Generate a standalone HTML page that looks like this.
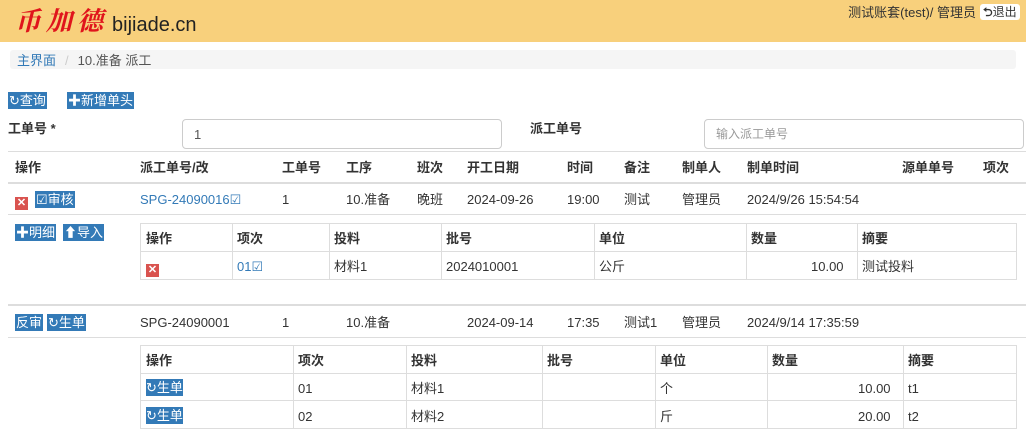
<!DOCTYPE html><html><head><meta charset="utf-8"><style>
*{margin:0;padding:0;box-sizing:border-box}
body{width:1026px;height:439px;overflow:hidden;background:#fff;font-family:"Liberation Sans","Noto Sans CJK SC",sans-serif;font-size:13px;line-height:17px;color:#333;position:relative}
.a{position:absolute;white-space:nowrap}
.b{position:absolute;background:#337ab7;color:#fff;height:17px;line-height:17px;font-size:13px;padding:0 1px;white-space:nowrap}
.hl{position:absolute;height:1px;background:#ddd}
.bold{font-weight:bold}
.x{display:inline-block;width:13px;height:13px;background:#d9534f;color:#fff;font-size:11px;line-height:13px;text-align:center;font-weight:bold;vertical-align:-1px}
.t{position:absolute;border:1px solid #ddd}
.t div{position:absolute;white-space:nowrap}
.vl{position:absolute;top:0;bottom:0;width:1px;background:#ddd}
.blue{color:#337ab7}
</style></head><body>
<div class="a" style="left:0;top:0;width:1026px;height:42px;background:#f8d07c"></div>
<div class="a" style="left:15px;top:4px;font-family:'Noto Serif CJK SC',serif;font-size:26px;line-height:32px;color:#e0141c;font-weight:bold;letter-spacing:5px;font-style:italic">币加德</div>
<div class="a" style="left:112px;top:14px;font-size:20px;line-height:22px;color:#222">bijiade.cn</div>
<div class="a" style="right:50px;top:4px;font-size:13px;color:#333">测试账套(test)/ 管理员</div>
<div class="a" style="left:980px;top:4px;width:40px;height:16px;background:#fff;border-radius:3px;font-size:12px;line-height:16px;padding-left:3px;color:#333"><b>⮌</b>退出</div>
<div class="a" style="left:10px;top:50px;width:1006px;height:19px;background:#f5f5f5;border-radius:3px"></div>
<div class="a" style="left:17px;top:52px;line-height:17px"><span class="blue">主界面</span><span style="color:#ccc;padding:0 9px">/</span><span style="color:#555">10.准备 派工</span></div>
<div class="b" style="left:8px;top:92px">↻查询</div>
<div class="b" style="left:67px;top:92px">✚新增单头</div>
<div class="a bold" style="left:8px;top:120px">工单号 *</div>
<div class="a" style="left:182px;top:119px;width:320px;height:30px;border:1px solid #ccc;border-radius:4px;padding:6px 11px;color:#555">1</div>
<div class="a bold" style="left:530px;top:120px">派工单号</div>
<div class="a" style="left:704px;top:119px;width:320px;height:30px;border:1px solid #ccc;border-radius:4px;padding:6px 11px;color:#999;font-size:12px">输入派工单号</div>
<div class="hl" style="left:8px;top:151px;width:1018px"></div>
<div class="a bold" style="left:15px;top:159px">操作</div>
<div class="a bold" style="left:140px;top:159px">派工单号/改</div>
<div class="a bold" style="left:282px;top:159px">工单号</div>
<div class="a bold" style="left:346px;top:159px">工序</div>
<div class="a bold" style="left:417px;top:159px">班次</div>
<div class="a bold" style="left:467px;top:159px">开工日期</div>
<div class="a bold" style="left:567px;top:159px">时间</div>
<div class="a bold" style="left:624px;top:159px">备注</div>
<div class="a bold" style="left:682px;top:159px">制单人</div>
<div class="a bold" style="left:747px;top:159px">制单时间</div>
<div class="a bold" style="left:902px;top:159px">源单单号</div>
<div class="a bold" style="left:983px;top:159px">项次</div>
<div class="hl" style="left:8px;top:182px;width:1018px;height:2px"></div>
<div class="a" style="left:15px;top:192px"><span class="x">✕</span></div>
<div class="b" style="left:35px;top:191px">☑审核</div>
<div class="a blue" style="left:140px;top:191px">SPG-24090016☑</div>
<div class="a" style="left:282px;top:191px">1</div>
<div class="a" style="left:346px;top:191px">10.准备</div>
<div class="a" style="left:417px;top:191px">晚班</div>
<div class="a" style="left:467px;top:191px">2024-09-26</div>
<div class="a" style="left:567px;top:191px">19:00</div>
<div class="a" style="left:624px;top:191px">测试</div>
<div class="a" style="left:682px;top:191px">管理员</div>
<div class="a" style="left:747px;top:191px">2024/9/26 15:54:54</div>
<div class="hl" style="left:8px;top:214px;width:1018px"></div>
<div class="b" style="left:15px;top:224px">✚明细</div>
<div class="b" style="left:63px;top:224px">⬆导入</div>
<div class="t" style="left:140px;top:223px;width:877px;height:57px">
<div class="vl" style="left:91px"></div><div class="vl" style="left:188px"></div><div class="vl" style="left:300px"></div><div class="vl" style="left:453px"></div><div class="vl" style="left:605px"></div><div class="vl" style="left:716px"></div>
<div style="left:0;right:0;top:27px;height:1px;background:#ddd"></div>
<div class="bold" style="left:5px;top:6px">操作</div><div class="bold" style="left:96px;top:6px">项次</div><div class="bold" style="left:193px;top:6px">投料</div><div class="bold" style="left:305px;top:6px">批号</div><div class="bold" style="left:458px;top:6px">单位</div><div class="bold" style="left:610px;top:6px">数量</div><div class="bold" style="left:721px;top:6px">摘要</div>
<div style="left:5px;top:35px"><span class="x">✕</span></div><div class="blue" style="left:96px;top:34px">01☑</div><div style="left:193px;top:34px">材料1</div><div style="left:305px;top:34px">2024010001</div><div style="left:458px;top:34px">公斤</div><div style="left:670px;top:34px">10.00</div><div style="left:721px;top:34px">测试投料</div>
</div>
<div class="hl" style="left:8px;top:304px;width:1018px;height:2px"></div>
<div class="b" style="left:15px;top:314px">反审</div>
<div class="b" style="left:47px;top:314px">↻生单</div>
<div class="a" style="left:140px;top:314px">SPG-24090001</div>
<div class="a" style="left:282px;top:314px">1</div>
<div class="a" style="left:346px;top:314px">10.准备</div>
<div class="a" style="left:467px;top:314px">2024-09-14</div>
<div class="a" style="left:567px;top:314px">17:35</div>
<div class="a" style="left:624px;top:314px">测试1</div>
<div class="a" style="left:682px;top:314px">管理员</div>
<div class="a" style="left:747px;top:314px">2024/9/14 17:35:59</div>
<div class="hl" style="left:8px;top:337px;width:1018px"></div>
<div class="t" style="left:140px;top:345px;width:877px;height:84px">
<div class="vl" style="left:152px"></div><div class="vl" style="left:265px"></div><div class="vl" style="left:401px"></div><div class="vl" style="left:514px"></div><div class="vl" style="left:626px"></div><div class="vl" style="left:762px"></div>
<div style="left:0;right:0;top:27px;height:1px;background:#ddd"></div>
<div style="left:0;right:0;top:54px;height:1px;background:#ddd"></div>
<div class="bold" style="left:5px;top:6px">操作</div><div class="bold" style="left:157px;top:6px">项次</div><div class="bold" style="left:270px;top:6px">投料</div><div class="bold" style="left:406px;top:6px">批号</div><div class="bold" style="left:519px;top:6px">单位</div><div class="bold" style="left:631px;top:6px">数量</div><div class="bold" style="left:767px;top:6px">摘要</div>
<div style="left:5px;top:33px;background:#337ab7;color:#fff;height:17px;line-height:17px">↻生单</div><div style="left:157px;top:34px">01</div><div style="left:270px;top:34px">材料1</div><div style="left:519px;top:34px">个</div><div style="left:717px;top:34px">10.00</div><div style="left:767px;top:34px">t1</div>
<div style="left:5px;top:61px;background:#337ab7;color:#fff;height:17px;line-height:17px">↻生单</div><div style="left:157px;top:62px">02</div><div style="left:270px;top:62px">材料2</div><div style="left:519px;top:62px">斤</div><div style="left:717px;top:62px">20.00</div><div style="left:767px;top:62px">t2</div>
</div>
</body></html>
